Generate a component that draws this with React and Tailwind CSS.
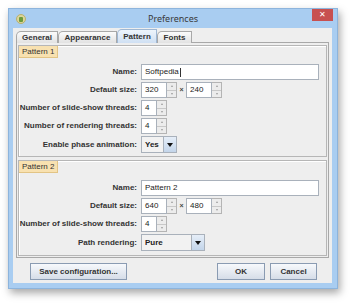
// App.jsx - Preferences dialog (Java Metal look on a Windows 8 frame)

const font = "font-['Liberation_Sans',Arial,sans-serif]";

const SpinButtons = () => (
  <div className="flex flex-col w-[10px] h-full border border-l-0 border-[#b4b4b4] bg-[#ececec]">
    <div className="flex-1 flex items-center justify-center border-b border-[#c8c8c8]">
      <div className="w-0 h-0 border-l-[1.5px] border-r-[1.5px] border-b-[2px] border-l-transparent border-r-transparent border-b-[#9a9a9a]"></div>
    </div>
    <div className="flex-1 flex items-center justify-center">
      <div className="w-0 h-0 border-l-[1.5px] border-r-[1.5px] border-t-[2px] border-l-transparent border-r-transparent border-t-[#9a9a9a]"></div>
    </div>
  </div>
);

const Spinner = ({ value, width }) => (
  <div className="flex h-[16px]">
    <div className={`${width} h-full bg-white border border-[#a9b1bb] px-[3px] flex items-center text-[8px] text-[#222]`}>
      {value}
    </div>
    <SpinButtons />
  </div>
);

const Combo = ({ value, width }) => (
  <div className="flex h-[17px]">
    <div className={`${width} h-full bg-[#f2f2f2] border border-[#a9b1bb] px-[3px] flex items-center text-[8px] font-bold text-[#222]`}>
      {value}
    </div>
    <div className="w-[13px] h-full border border-l-0 border-[#a9b1bb] bg-gradient-to-b from-[#e6eef8] to-[#c3d5ea] flex items-center justify-center">
      <div className="w-0 h-0 border-l-[3.5px] border-r-[3.5px] border-t-[4px] border-l-transparent border-r-transparent border-t-[#111]"></div>
    </div>
  </div>
);

const TextField = ({ value, cursor }) => (
  <div className="w-[178px] h-[16px] bg-white border border-[#a9b1bb] px-[3px] flex items-center text-[8px] text-[#222]">
    {value}
    {cursor && <span className="ml-[1px] w-px h-[9px] bg-[#333]"></span>}
  </div>
);

const Row = ({ label, children }) => (
  <div className="flex items-center gap-[4px]">
    <div className="w-[118px] text-right text-[8px] font-bold text-[#333] whitespace-nowrap">{label}</div>
    {children}
  </div>
);

const SizeField = ({ w, h }) => (
  <div className="flex items-center">
    <Spinner value={w} width="w-[26px]" />
    <span className="w-[9px] text-center text-[7px] font-bold text-[#444]">×</span>
    <Spinner value={h} width="w-[26px]" />
  </div>
);

const GroupHeader = ({ title }) => (
  <div className="self-start h-[12px] px-[3px] flex items-center bg-[#f8e1b0] border-r border-b border-[#e2c485] text-[8px] text-[#333]">
    {title}
  </div>
);

const Tab = ({ label, active, width }) => (
  <div
    className={`${width} flex items-center justify-center rounded-tl-[5px] border border-b-0 text-[8px] font-bold text-[#333] ${
      active
        ? "h-[14px] border-[#9fb7d3] bg-gradient-to-b from-[#eef4fb] to-[#cfe0f3]"
        : "h-[12px] border-[#a8a8a8] bg-gradient-to-b from-[#fbfbfb] to-[#e2e2e2]"
    }`}
  >
    {label}
  </div>
);

const Button = ({ label, width }) => (
  <div className={`${width} h-[17px] flex items-center justify-center border border-[#8a9bb2] bg-gradient-to-b from-[#f7f9fc] to-[#d6dde8] text-[8px] font-bold text-[#333]`}>
    {label}
  </div>
);

export default function App() {
  return (
    <div className={`w-[350px] h-[303px] bg-white pt-[8px] pl-[8px] ${font}`}>
      <div className="w-[330px] h-[281px] bg-[#a9cdf1] border border-[#8db4dc] shadow-[2px_4px_8px_rgba(0,0,0,0.35)] flex flex-col">
        {/* title bar */}
        <div className="relative h-[19px] flex items-center justify-center shrink-0">
          <div className="absolute left-[7px] top-[5px] w-[10px] h-[10px] rounded-full bg-[#dcd59a] border border-[#b8b070] flex items-center justify-center">
            <div className="w-[4px] h-[5px] bg-[#6c9a3c] rounded-[1px]"></div>
          </div>
          <span className="text-[9px] text-[#3a3a3a] font-['Noto_Sans','Liberation_Sans',sans-serif]">Preferences</span>
          <div className="absolute right-[4px] top-0 w-[21px] h-[12px] bg-[#c75050] flex items-center justify-center text-white text-[8px] leading-none">
            ✕
          </div>
        </div>

        {/* client area */}
        <div className="flex-1 ml-[4px] mr-[5px] mb-[5px] bg-[#eeeeee] flex flex-col pt-[2px] pl-[3px]">
          {/* tabs */}
          <div className="flex items-end h-[13px] -mb-px relative z-10">
            <Tab label="General" width="w-[42px]" />
            <Tab label="Appearance" width="w-[59px]" />
            <Tab label="Pattern" active width="w-[40px]" />
            <Tab label="Fonts" width="w-[35px]" />
          </div>

          {/* tab panel */}
          <div className="w-[313px] h-[216px] border border-[#a8a8a8] bg-[#eeeeee] pt-[2px] px-px flex flex-col gap-[3px]">
            <div className="h-[112px] border border-[#b6b6b6] shadow-[inset_1px_1px_0_#fff] flex flex-col pb-[3px]">
              <GroupHeader title="Pattern 1" />
              <div className="mt-[6px] flex flex-col gap-[2px]">
                <Row label="Name:">
                  <TextField value="Softpedia" cursor />
                </Row>
                <Row label="Default size:">
                  <SizeField w="320" h="240" />
                </Row>
                <Row label="Number of slide-show threads:">
                  <Spinner value="4" width="w-[16px]" />
                </Row>
                <Row label="Number of rendering threads:">
                  <Spinner value="4" width="w-[16px]" />
                </Row>
                <Row label="Enable phase animation:">
                  <Combo value="Yes" width="w-[23px]" />
                </Row>
              </div>
            </div>

            <div className="h-[96px] border border-[#b6b6b6] shadow-[inset_1px_1px_0_#fff] flex flex-col">
              <GroupHeader title="Pattern 2" />
              <div className="mt-[7px] flex flex-col gap-[2px]">
                <Row label="Name:">
                  <TextField value="Pattern 2" />
                </Row>
                <Row label="Default size:">
                  <SizeField w="640" h="480" />
                </Row>
                <Row label="Number of slide-show threads:">
                  <Spinner value="4" width="w-[16px]" />
                </Row>
                <Row label="Path rendering:">
                  <Combo value="Pure" width="w-[51px]" />
                </Row>
              </div>
            </div>
          </div>

          {/* buttons */}
          <div className="mt-[5px] flex items-center pl-[14px] pr-[15px]">
            <Button label="Save configuration..." width="w-[97px]" />
            <div className="flex-1"></div>
            <div className="flex gap-[5px]">
              <Button label="OK" width="w-[48px]" />
              <Button label="Cancel" width="w-[47px]" />
            </div>
          </div>
        </div>
      </div>
    </div>
  );
}
